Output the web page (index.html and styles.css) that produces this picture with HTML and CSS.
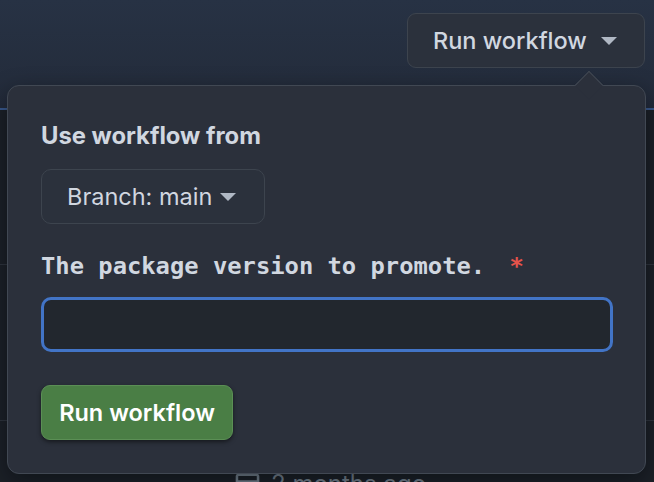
FILE: index.html
```html
<!DOCTYPE html>
<html>
<head>
<meta charset="utf-8">
<link rel="stylesheet" href="styles.css">
</head>
<body>
<div class="page">
  <header class="topbar">
    <button class="btn btn-top">Run workflow <span class="caret"></span></button>
  </header>
  <div class="list">
    <div class="row row-1"></div>
    <div class="row row-2"></div>
    <div class="row row-3">
      <svg class="cal" width="27" height="27" viewBox="0 0 16 16"><path fill="currentColor" d="M4.75 0a.75.75 0 0 1 .75.75V2h5V.75a.75.75 0 0 1 1.5 0V2h1.25c.966 0 1.75.784 1.75 1.75v10.5A1.750 1.75 0 0 1 13.25 16H2.75A1.75 1.75 0 0 1 1 14.25V3.75C1 2.784 1.784 2 2.750 2H4V.75A.75.75 0 0 1 4.75 0ZM2.5 7.5v6.75c0 .138.112.25.25.25h10.5a.25.25 0 0 0 .25-.25V7.5Zm10.75-4H2.75a.25.25 0 0 0-.25.25V6h11V3.75a.25.25 0 0 0-.25-.25Z"/></svg>
      <span class="ago">2 months ago</span>
    </div>
  </div>

  <div class="popover">
    <span class="pointer"></span>
    <div class="field-label">Use workflow from</div>
    <button class="btn btn-branch">Branch: main <span class="caret"></span></button>
    <div class="input-label">The package version to promote. <span class="req">*</span></div>
    <input class="text-input" type="text">
    <button class="btn-green">Run workflow</button>
  </div>
</div>
</body>
</html>
```

FILE: styles.css
```css
* { box-sizing: border-box; }
html, body { margin: 0; padding: 0; }
body {
  width: 654px;
  height: 482px;
  overflow: hidden;
  background: #1c2128;
  font-family: "Inter", "Liberation Sans", sans-serif;
  color: #d1d7e0;
}
.page { position: relative; width: 654px; height: 482px; }

.topbar {
  height: 110px;
  background: linear-gradient(#273244, #232b3a);
  border-bottom: 2px solid #3a5a8e;
  display: flex;
  justify-content: flex-end;
  align-items: flex-start;
  padding: 13px 9px 0 0;
}
.btn {
  font-family: inherit;
  color: #d1d7e0;
  background: #2b313c;
  border: 1.5px solid #3d444e;
  display: flex;
  align-items: center;
  cursor: pointer;
}
.btn-top {
  height: 55px;
  width: 238px;
  border-radius: 9px;
  font-size: 23.5px;
  font-weight: 500;
  padding: 0 0 0 25px;
  gap: 14px;
}
.caret {
  width: 0;
  height: 0;
  border-left: 8px solid transparent;
  border-right: 8px solid transparent;
  border-top: 8px solid #b0b8c4;
  display: inline-block;
}
.list { display: flex; flex-direction: column; }
.row { border-bottom: 1px solid #2f353e; }
.row-1 { height: 155px; }
.row-2 { height: 156px; }
.row-3 {
  display: flex;
  align-items: flex-start;
  padding: 49px 0 0 234px;
  gap: 10px;
  color: #768390;
  border-bottom: none;
}
.cal { margin-top: 0; }
.ago { font-size: 24px; line-height: 28px; }

.popover {
  position: absolute;
  left: 7px;
  top: 85px;
  width: 639px;
  height: 389px;
  background: #2b303b;
  border: 1.5px solid #414853;
  border-radius: 12px;
  padding: 35px 33px 0 33px;
  display: flex;
  flex-direction: column;
  align-items: flex-start;
  box-shadow: 0 8px 24px rgba(1, 4, 9, 0.45);
}
.pointer {
  position: absolute;
  top: -11px;
  left: 571px;
  width: 20px;
  height: 20px;
  background: #2b303b;
  border-top: 1.5px solid #414853;
  border-left: 1.5px solid #414853;
  transform: rotate(45deg);
}
.field-label {
  font-size: 23.8px;
  font-weight: 700;
  line-height: 30px;
  color: #d1d7e0;
}
.btn-branch {
  margin-top: 18px;
  height: 55px;
  width: 224px;
  border-radius: 10px;
  font-size: 23.5px;
  padding: 0 0 0 25px;
  gap: 8px;
}
.input-label {
  margin-top: 28px;
  font-family: "DejaVu Sans Mono", monospace;
  font-weight: 700;
  font-size: 23.8px;
  line-height: 28px;
  color: #d1d7e0;
  white-space: pre;
}
.req { color: #e5534b; margin-left: 10px; }
.text-input {
  margin-top: 17px;
  width: 572px;
  height: 55px;
  background: #22272e;
  border: 3px solid #4274c6;
  border-radius: 10px;
  outline: none;
}
.btn-green {
  margin-top: 33px;
  width: 192px;
  height: 55px;
  background: #4a7e45;
  border: 1.5px solid #5b8f55;
  border-radius: 9px;
  color: #ffffff;
  font-family: inherit;
  font-size: 23.5px;
  font-weight: 600;
  padding: 0;
  box-shadow: 0 2px 4px rgba(0, 0, 0, 0.5);
}
```
